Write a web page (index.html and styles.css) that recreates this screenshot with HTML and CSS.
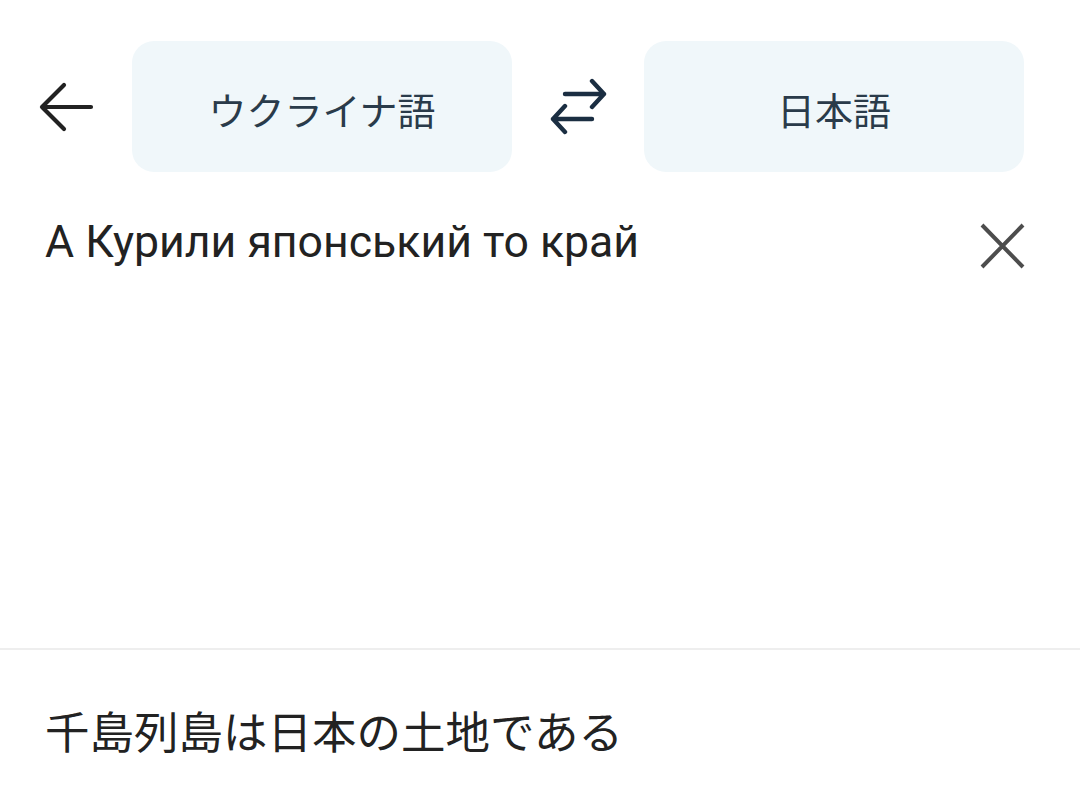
FILE: index.html
```html
<!DOCTYPE html>
<html lang="ja">
<head>
<meta charset="utf-8">
<link rel="stylesheet" href="styles.css">
</head>
<body>
<div class="app">
  <header class="topbar">
    <button class="icon-btn back" aria-label="back">
      <svg width="56" height="56" viewBox="0 0 56 56"><path d="M53 28H4M26 6L4 28l22 22" fill="none" stroke="#222" stroke-width="4.2" stroke-linecap="round" stroke-linejoin="round"/></svg>
    </button>
    <div class="lang">ウクライナ語</div>
    <button class="icon-btn swap" aria-label="swap">
      <svg width="60" height="58" viewBox="0 0 60 58"><path d="M17 16H56M44 3l12 13-12 13M44 41H5M17 28L5 41l12 13" fill="none" stroke="#1b2e42" stroke-width="4.4" stroke-linecap="round" stroke-linejoin="round"/></svg>
    </button>
    <div class="lang">日本語</div>
  </header>
  <section class="input">
    <div class="source-text">А Курили японський то край</div>
    <button class="icon-btn clear" aria-label="clear">
      <svg width="48" height="48" viewBox="0 0 48 48"><path d="M4 3L45 45M45 3L4 45" fill="none" stroke="#4d4d4d" stroke-width="4"/></svg>
    </button>
  </section>
  <section class="output">
    <div class="target-text">千島列島は日本の土地である</div>
  </section>
</div>
</body>
</html>
```

FILE: styles.css
```css
html, body {
  margin: 0;
  padding: 0;
  background: #fff;
}
body {
  font-family: Roboto, "Noto Sans CJK JP", sans-serif;
  color: #222;
}
.app {
  width: 1080px;
  height: 809px;
  overflow: hidden;
}
.topbar {
  display: flex;
  align-items: center;
  padding: 41px 55px 0 38px;
  height: 131px;
}
.icon-btn {
  border: 0;
  background: none;
  padding: 0;
  display: flex;
  align-items: center;
  justify-content: center;
  cursor: pointer;
}
.back {
  width: 56px;
  height: 56px;
  margin-right: 38px;
}
.swap {
  width: 132px;
  height: 58px;
}
.lang {
  width: 380px;
  height: 131px;
  border-radius: 22px;
  background: #f0f7fa;
  color: #2a3b4a;
  font-family: "Noto Sans CJK JP", sans-serif;
  font-size: 38px;
  display: flex;
  align-items: center;
  justify-content: center;
  padding-top: 3px;
  box-sizing: border-box;
}
.input {
  display: flex;
  align-items: flex-start;
  justify-content: space-between;
  padding: 40px 54px 0 45px;
  height: 478px;
  border-bottom: 2px solid #eeeeee;
  box-sizing: border-box;
}
.source-text {
  font-size: 44.6px;
  line-height: 60px;
  color: #222;
}
.clear {
  width: 48px;
  height: 48px;
  margin-top: 10px;
}
.output {
  padding: 48px 45px 0;
}
.target-text {
  font-family: "Noto Sans CJK JP", sans-serif;
  font-size: 44.5px;
  line-height: 64px;
  color: #222;
}
```
